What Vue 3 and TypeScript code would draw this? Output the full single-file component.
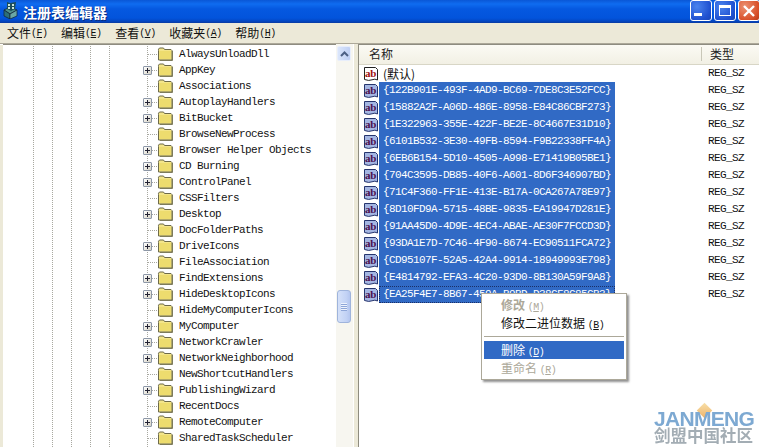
<script setup lang="ts">
const treeItems: [string, boolean][] = [
  ['AlwaysUnloadDll', false], ['AppKey', true], ['Associations', false], ['AutoplayHandlers', true],
  ['BitBucket', true], ['BrowseNewProcess', false], ['Browser Helper Objects', true], ['CD Burning', true],
  ['ControlPanel', true], ['CSSFilters', false], ['Desktop', true], ['DocFolderPaths', false],
  ['DriveIcons', true], ['FileAssociation', false], ['FindExtensions', true], ['HideDesktopIcons', true],
  ['HideMyComputerIcons', false], ['MyComputer', true], ['NetworkCrawler', true], ['NetworkNeighborhood', true],
  ['NewShortcutHandlers', false], ['PublishingWizard', true], ['RecentDocs', false], ['RemoteComputer', true],
  ['SharedTaskScheduler', false], ['', false],
]
const guids = [
  '122B901E-493F-4AD9-BC69-7DE8C3E52FCC', '15882A2F-A06D-486E-8958-E84C86CBF273',
  '1E322963-355E-422F-BE2E-8C4667E31D10', '6101B532-3E30-49FB-8594-F9B22338FF4A',
  '6EB6B154-5D10-4505-A998-E71419B05BE1', '704C3595-DB85-40F6-A601-8D6F346907BD',
  '71C4F360-FF1E-413E-B17A-0CA267A78E97', '8D10FD9A-5715-48BE-9835-EA19947D281E',
  '91AA45D0-4D9E-4EC4-ABAE-AE30F7FCCD3D', '93DA1E7D-7C46-4F90-8674-EC90511FCA72',
  'CD95107F-52A5-42A4-9914-18949993E798', 'E4814792-EFA3-4C20-93D0-8B130A59F9A8',
  'EA25F4E7-8B67-459A-B9BD-D38CF8C85CB3',
]
const menus = [['文件', 'F'], ['编辑', 'E'], ['查看', 'V'], ['收藏夹', 'A'], ['帮助', 'H']]
</script>

<template>
  <div class="win">
    <header class="titlebar">
      <svg class="appicon" width="16" height="18" viewBox="0 0 16 18">
        <path d="M1 9l6-3 7 3-7 4z" fill="#4f8f8a" stroke="#123" stroke-width=".7" />
        <path d="M1 9v6l6 3V13z" fill="#2d6f78" stroke="#123" stroke-width=".7" />
        <path d="M7 13v5l7-3V9z" fill="#6aa7a5" stroke="#123" stroke-width=".7" />
        <path d="M4 1l3 1 6-1-1 7-4 2-4-2z" fill="#1d4d59" />
        <path d="M5 3h2v2H5zM9 3h2v2H9zM5 6h2v2H5zM9 6h2v2H9z" fill="#c9e4dc" />
      </svg>
      <span class="title">注册表编辑器</span>
      <div class="controls">
        <button class="ctl"><i class="min"></i></button>
        <button class="ctl"><i class="max"></i></button>
        <button class="ctl close">
          <svg width="14" height="14" viewBox="0 0 14 14"><path d="M2 2l10 10M12 2L2 12" stroke="#fff" stroke-width="2.4" /></svg>
        </button>
      </div>
    </header>

    <nav class="menubar">
      <span v-for="m in menus" :key="m[1]" class="menu">{{ m[0] }}<span class="acc">(<u>{{ m[1] }}</u>)</span></span>
    </nav>

    <main class="panes">
      <section class="tree">
        <div v-for="(t, i) in treeItems" :key="i" class="node">
          <span class="twig">
            <span v-if="t[1]" class="plus"></span>
          </span>
          <svg class="folder" width="16" height="14" viewBox="0 0 16 14">
            <path d="M1.5 3.5V2.2L2.5 1h4l1 1.5h6.5l1 1V13H1.5z" fill="#f3e58a" stroke="#6d6a4a" />
            <path d="M2.5 4h11.5v8H2.5z" fill="#eddc6e" />
            <path d="M15.5 4v9.5H3" fill="none" stroke="#7d7b5c" />
          </svg>
          <span class="label">{{ t[0] }}</span>
        </div>
      </section>

      <aside class="vscroll">
        <div class="sb-btn">
          <svg width="9" height="6" viewBox="0 0 9 6"><path d="M1 5l3.5-3.5L8 5" fill="none" stroke="#4d6185" stroke-width="2" /></svg>
        </div>
        <div class="sb-spacer"></div>
        <div class="sb-thumb"><i></i><i></i><i></i><i></i></div>
      </aside>

      <div class="splitter"></div>

      <section class="list">
        <div class="lhead">
          <span class="h-name">名称</span>
          <span class="h-type">类型</span>
        </div>
        <div class="row">
          <svg class="ab" width="16" height="16" viewBox="0 0 16 16">
            <path d="M1.5 1.5h11l2 2v10.5q-2.5-1.6-5.500-.2t-7.500-.3z" fill="#fff" stroke="#222" />
            <text x="2" y="11" class="abt">ab</text>
          </svg>
          <span class="name plain">(默认)</span>
          <span class="type">REG_SZ</span>
        </div>
        <div v-for="(g, i) in guids" :key="g" class="row">
          <svg class="ab sel" width="16" height="16" viewBox="0 0 16 16">
            <path d="M1.500 1.500h11l2 2v10.500q-2.500-1.600-5.500-.2t-7.500-.3z" fill="#a4b6e2" stroke="#26356e" />
            <text x="2" y="11" class="abt">ab</text>
          </svg>
          <span class="name" :class="{ focus: i === guids.length - 1 }">{{ '{' + g + '}' }}</span>
          <span class="type">REG_SZ</span>
        </div>
      </section>
    </main>

    <div class="ctx">
      <div class="mi strong dim">修改 <span class="acc">(<u>M</u>)</span></div>
      <div class="mi">修改二进位数据 <span class="acc">(<u>B</u>)</span></div>
      <div class="sep"></div>
      <div class="mi hot">删除 <span class="acc">(<u>D</u>)</span></div>
      <div class="mi dim">重命名 <span class="acc">(<u>R</u>)</span></div>
    </div>

    <div class="mark">
      <i class="diamond"></i>
      <div class="mark-en">JANMENG</div>
      <div class="mark-cn">剑盟中国社区</div>
    </div>
  </div>
</template>

<style>
html, body { margin: 0; overflow: hidden; background: #fff; }
</style>

<style scoped>
.win {
  width: 759px; height: 447px; overflow: hidden; position: relative;
  display: flex; flex-direction: column; background: #ece9d8;
  font: 12px "Noto Sans CJK SC", "Liberation Sans", sans-serif; color: #000;
}
.titlebar {
  height: 23px; flex: none; display: flex; align-items: center; padding-left: 3px; box-sizing: border-box;
  background: linear-gradient(180deg, #0a57d6 0, #0f6cf0 4px, #0558e0 9px, #0254dc 18px, #0347c4 21px, #0a3aa0 23px);
}
.appicon { flex: none; margin-top: -3px; }
.title {
  margin-left: 4px; color: #fff; font-size: 14px; font-weight: 700; text-shadow: 1px 1px 0 #0a2c80;
}
.controls { margin-left: auto; display: flex; gap: 2px; align-self: flex-start; }
.ctl {
  width: 22px; height: 21px; padding: 0; box-sizing: border-box; border: 1px solid #fff; border-radius: 3px;
  background: radial-gradient(circle at 30% 30%, #4a83ee, #1f50d0 70%, #1a46b8);
  display: flex; align-items: center; justify-content: center; position: relative;
}
.ctl.close { background: radial-gradient(circle at 30% 30%, #ec9272, #d8502a 70%, #b83a18); margin-right: -1px; }
.min { width: 8px; height: 3px; background: #fff; align-self: flex-end; margin: 0 6px 4px 0; }
.max { width: 12px; height: 11px; box-sizing: border-box; border: 1px solid #fff; border-top-width: 3px; }
.menubar { height: 20px; flex: none; display: flex; align-items: center; box-sizing: border-box; background: #ece9d8; }
.menu { padding: 0 6.5px 0 7px; line-height: 20px; white-space: nowrap; display: inline-flex; align-items: center; color: #111; }
.acc { font: 10px "Liberation Mono", monospace; letter-spacing: -.5px; }
.panes {
  flex: 1; min-height: 0; display: flex; box-sizing: border-box; padding-left: 3px;
  border-top: 1px solid #aca899; box-shadow: inset 0 1px 0 #fff;
}
.tree {
  width: 333px; flex: none; box-sizing: border-box; padding-top: 1px; overflow: hidden; background-color: #fff;
  border-top: 1px solid #8e8c80;
  background-image:
    repeating-linear-gradient(0deg, #a8a8a0 0 1px, transparent 1px 2px),
    repeating-linear-gradient(0deg, #a8a8a0 0 1px, transparent 1px 2px),
    repeating-linear-gradient(0deg, #a8a8a0 0 1px, transparent 1px 2px),
    repeating-linear-gradient(0deg, #a8a8a0 0 1px, transparent 1px 2px),
    repeating-linear-gradient(0deg, #a8a8a0 0 1px, transparent 1px 2px),
    repeating-linear-gradient(0deg, #a8a8a0 0 1px, transparent 1px 2px);
  background-size: 1px 100%;
  background-repeat: no-repeat;
  background-position: 30px 0, 49px 0, 68px 0, 87px 0, 106px 0, 144px 0;
}
.node { height: 16px; display: flex; align-items: center; padding-left: 140px; white-space: nowrap; }
.twig {
  width: 14px; height: 16px; flex: none; display: flex; align-items: center;
  background: repeating-linear-gradient(90deg, #a8a8a0 0 1px, transparent 1px 2px) 5px 8px / 10px 1px no-repeat;
}
.plus {
  width: 9px; height: 9px; box-sizing: border-box; border: 1px solid #8d97a6; border-radius: 1px;
  background:
    linear-gradient(#223, #223) center / 5px 1px no-repeat,
    linear-gradient(#223, #223) center / 1px 5px no-repeat,
    linear-gradient(135deg, #fff, #d5d2c4);
}
.folder { flex: none; }
.label { margin-left: 6px; font: 11px/16px "Liberation Mono", monospace; letter-spacing: -.6px; color: #111; }
.vscroll {
  width: 17px; flex: none; box-sizing: border-box; padding: 2px 2px 0 1px; display: flex; flex-direction: column; background: #f7f6f0;
}
.sb-btn {
  height: 15px; flex: none; border-radius: 2px; border: 1px solid #e8eefb; box-sizing: border-box;
  background: linear-gradient(90deg, #dbe6fb, #bfd0f4); display: flex; align-items: center; justify-content: center;
}
.sb-spacer { height: 229px; flex: none; }
.sb-thumb {
  height: 33px; flex: none; box-sizing: border-box; border: 1px solid #9fb4dc; border-radius: 3px;
  background: linear-gradient(90deg, #d5e1f9, #c2d2f5 70%, #b4c6ef);
  display: flex; flex-direction: column; align-items: center; justify-content: center; gap: 1px;
}
.sb-thumb i { width: 6px; height: 1px; background: #eef3fd; box-shadow: 0 1px 0 #8ea6d8; }
.splitter { width: 5px; flex: none; background: #ece9d8; box-shadow: inset 1px 0 0 #fff; }
.list { flex: 1; min-width: 0; background: #fff; border-left: 1px solid #8e8c80; border-top: 1px solid #8e8c80; overflow: hidden; }
.lhead {
  height: 20px; padding-bottom: 2px; display: flex; align-items: center; background: linear-gradient(#fbfaf4, #f2f0e4); box-sizing: border-box;
  border-bottom: 1px solid #d8d6c6; color: #222;
}
.h-name { margin-left: 10px; width: 332px; flex: none; border-right: 1px solid #c9c7b8; height: 14px; line-height: 14px; }
.h-type { margin-left: 8px; }
.row { height: 17px; display: flex; align-items: center; padding-left: 4px; }
.ab { flex: none; }
.abt { font: 700 11px "Liberation Serif", serif; fill: #a01010; letter-spacing: -.3px; }
.ab.sel .abt { fill: #4a1050; }
.name {
  width: 236px; flex: none; box-sizing: border-box; height: 17px; padding-left: 4px;
  background: #316ac5; color: #fff; font: 11px/17px "Liberation Mono", monospace; letter-spacing: -.6px; white-space: nowrap; overflow: hidden;
}
.name.focus { outline: 1px dotted #1a2f66; outline-offset: -1px; }
.name.plain { background: none; color: #111; font: 12px/17px "Noto Sans CJK SC", sans-serif; letter-spacing: 0; padding-left: 4px; }
.type { margin-left: 93px; font: 11px/17px "Liberation Mono", monospace; letter-spacing: -.6px; color: #111; }
.ctx {
  position: absolute; left: 481px; top: 293px; width: 146px; height: 87px; box-sizing: border-box;
  padding: 2px 2px; background: #fff; border: 1px solid #aca899; box-shadow: 2px 2px 2px rgba(70, 70, 70, .6);
}
.mi { height: 18px; line-height: 18px; padding-left: 17px; white-space: nowrap; color: #111; }
.mi.strong { font-weight: 700; }
.mi.dim { color: #aca899; }
.mi.hot { background: #316ac5; color: #fff; }
.sep { height: 1px; margin: 4px 0; background: #aca899; }
.mark { position: absolute; left: 654px; top: 403px; width: 102px; height: 42px; filter: blur(.3px); }
.diamond {
  position: absolute; left: 45px; top: 2px; width: 11px; height: 11px; transform: rotate(45deg);
  background: linear-gradient(135deg, #f7dfa8, #eeb36a);
}
.mark-en {
  position: relative; margin-top: 6px; font: 700 21px/20px "Liberation Sans", sans-serif; letter-spacing: -.7px;
  color: #7da9d2; white-space: nowrap;
}
.mark-cn { position: relative; margin-top: -1px; font: 700 16.5px/17px "Liberation Sans", "Noto Sans CJK SC", sans-serif; color: #a3adb4; white-space: nowrap; }
</style>
